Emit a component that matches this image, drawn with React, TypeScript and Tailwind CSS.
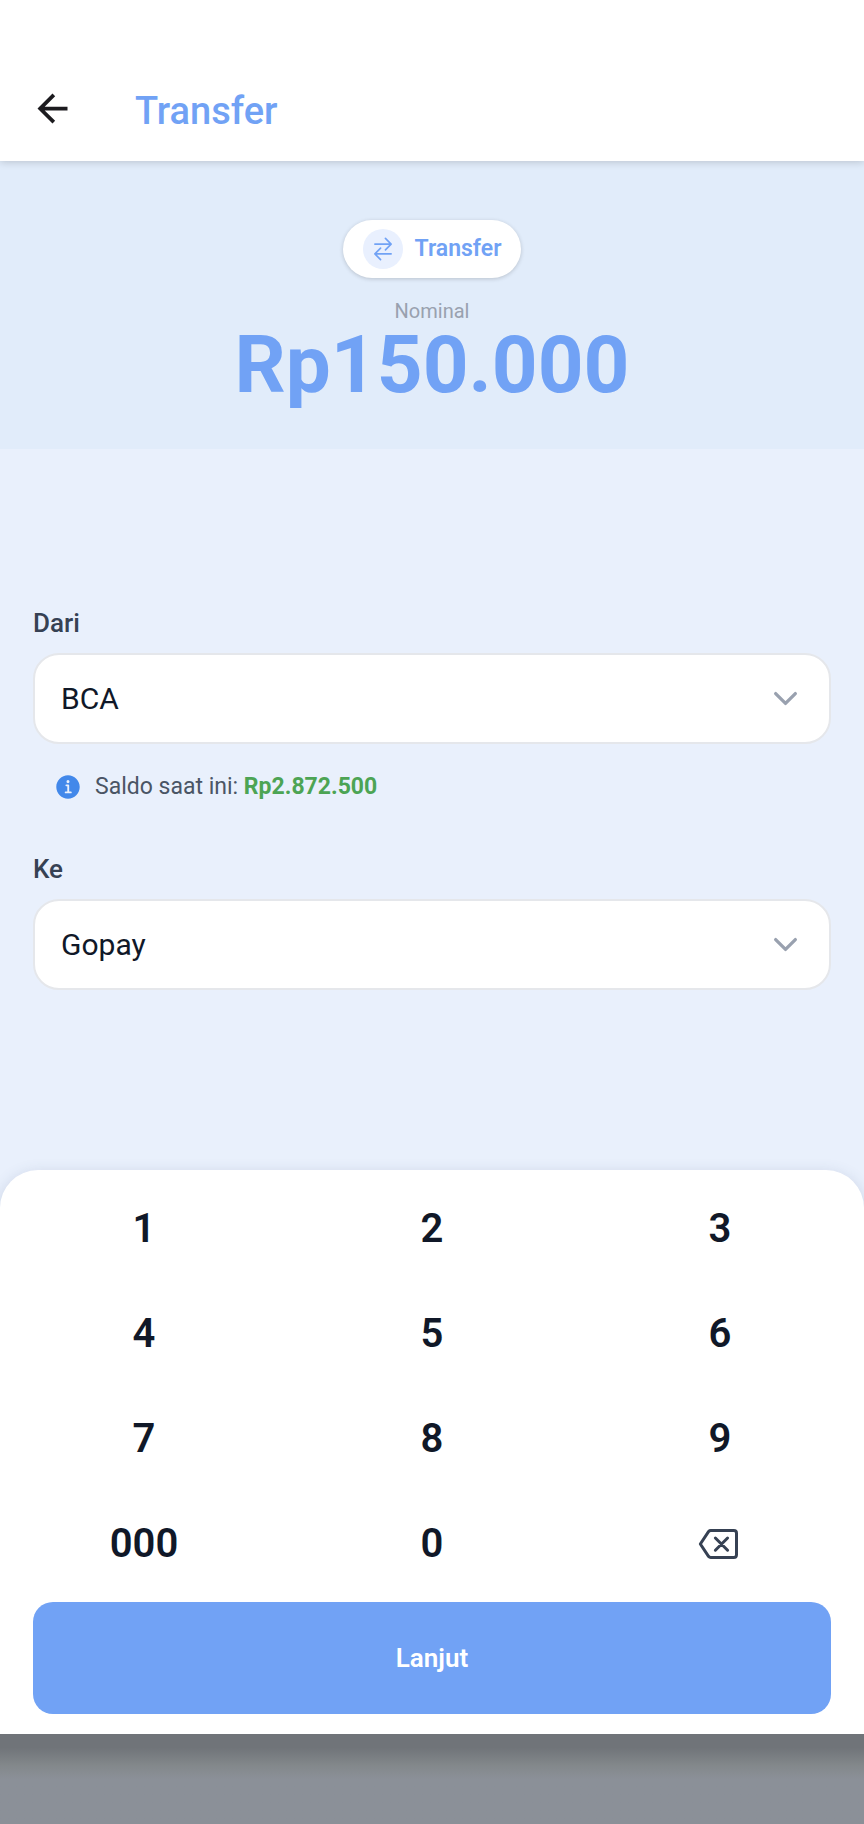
import { useState } from 'react';
import { IoBackspaceOutline, IoChevronDown, IoInformationCircle, IoSwapHorizontalOutline } from 'react-icons/io5';
import { MdArrowBack } from 'react-icons/md';

interface SelectFieldProps {
  id: string;
  label: string;
  value: string;
  onChange: (value: string) => void;
}

const accounts = ['BCA', 'Gopay', 'Mandiri', 'Dana'];
const keys = ['1', '2', '3', '4', '5', '6', '7', '8', '9', '000', '0'];

const formatRupiah = (amount: string) => `Rp${amount.replace(/\B(?=(\d{3})+$)/g, '.')}`;

const SelectField = ({ id, label, value, onChange }: SelectFieldProps) => (
  <div>
    <label htmlFor={id} className="block text-[26px] leading-8 font-medium text-gray-700 mb-3.5">{label}</label>
    <div className="relative">
      <select
        id={id}
        value={value}
        onChange={(e) => onChange(e.target.value)}
        className="w-full h-[91px] pl-[26px] pr-20 appearance-none bg-white border-2 border-gray-200 rounded-[26px] text-[30px] text-gray-900 focus:outline-none"
      >
        {accounts.map((name) => <option key={name} value={name}>{name}</option>)}
      </select>
      <IoChevronDown size={35} className="absolute right-7 inset-y-0 my-auto text-gray-400 pointer-events-none" />
    </div>
  </div>
);

const App = () => {
  const [amount, setAmount] = useState('150000');
  const [from, setFrom] = useState('BCA');
  const [to, setTo] = useState('Gopay');

  const handleKey = (key: string) => {
    const next = (amount + key).replace(/^0+(?=\d)/, '');
    if (next.length <= 12) setAmount(next);
  };

  const handleDelete = () => setAmount(amount.slice(0, -1) || '0');

  return (
    <div className="min-h-screen flex flex-col bg-[#e9f0fc] font-[Roboto,sans-serif]">
      <header className="relative flex items-center gap-[60px] bg-white pt-14 px-[30px] h-[161px] shadow-[0_1px_8px_rgba(0,0,0,0.18)]">
        <button type="button" aria-label="Kembali" className="cursor-pointer">
          <MdArrowBack size={45} className="text-[#1c1b1f]" />
        </button>
        <h1 className="pt-1 text-[38px] leading-[44px] font-medium text-[#71a2f5]">Transfer</h1>
      </header>

      <section className="flex flex-col items-center bg-[#e1ecfa] pt-[59px] pb-11">
        <div className="flex items-center gap-3 h-[58px] px-5 bg-white rounded-full shadow-[0_1px_4px_rgba(0,0,0,0.18)]">
          <span className="size-10 flex items-center justify-center rounded-full bg-[#e9f0fe]">
            <IoSwapHorizontalOutline size={26} className="text-[#71a2f5]" />
          </span>
          <span className="text-[23px] leading-8 font-semibold text-[#71a2f5]">Transfer</span>
        </div>
        <p className="mt-5 text-xl leading-[27px] text-gray-400">Nominal</p>
        <p className="text-[80px] leading-[80px] font-bold text-[#71a2f5]">{formatRupiah(amount)}</p>
      </section>

      <main className="flex-1 px-[33px] pt-[158px] pb-10">
        <SelectField id="from" label="Dari" value={from} onChange={setFrom} />
        <div className="flex items-center gap-3 mt-[27px] mb-[50px] pl-5 text-[23px] leading-8 text-gray-600">
          <IoInformationCircle size={30} className="text-[#4288ea]" />
          <p>
            Saldo saat ini: <span className="font-bold text-[#4ca454]">Rp2.872.500</span>
          </p>
        </div>
        <SelectField id="to" label="Ke" value={to} onChange={setTo} />
      </main>

      <div className="bg-[#8b9098]">
        <div className="bg-[#e9f0fc]">
          <div className="bg-white rounded-t-[38px] px-[33px] pt-1.5 pb-5 shadow-[0_4px_16px_rgba(60,80,120,0.2)]">
            <div className="-mx-[33px] grid grid-cols-3">
              {keys.map((key) => (
                <button key={key} type="button" onClick={() => handleKey(key)} className="h-[105px] text-[40px] font-semibold text-gray-900 cursor-pointer">
                  {key}
                </button>
              ))}
              <button type="button" aria-label="Hapus" onClick={handleDelete} className="h-[105px] flex items-center justify-center cursor-pointer">
                <IoBackspaceOutline size={48} className="text-gray-700" />
              </button>
            </div>
            <button type="button" className="w-full h-28 mt-1.5 rounded-[20px] bg-[#71a2f5] text-[26px] font-semibold text-white cursor-pointer">
              Lanjut
            </button>
          </div>
        </div>
        <div className="relative h-[90px] bg-linear-to-b from-[#707479] from-15% via-[#83888b] via-35% to-[#8b9098] to-50%" />
      </div>
    </div>
  );
};

export default App;
